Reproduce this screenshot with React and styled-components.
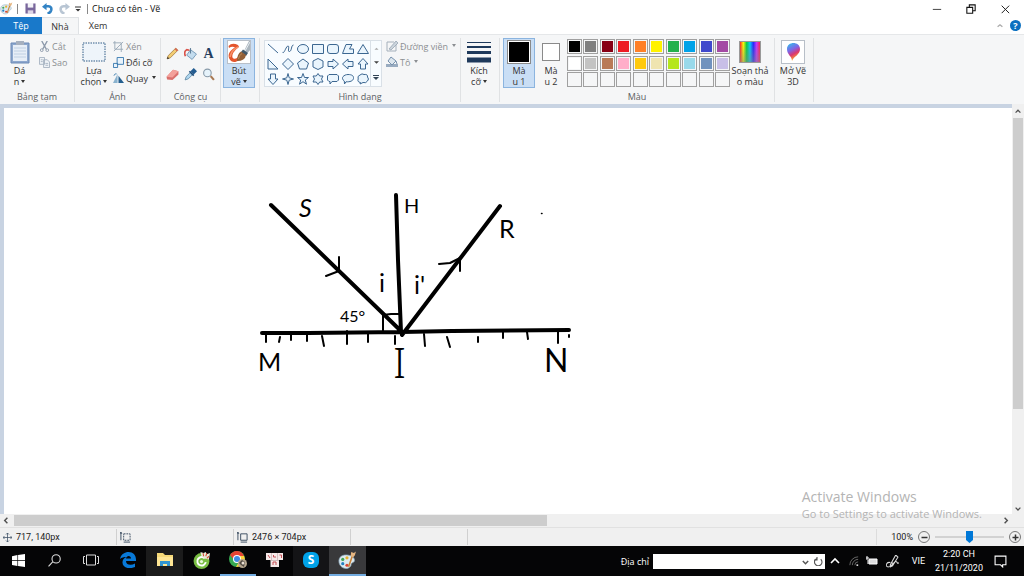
import React, { useState } from "react";
import styled, { createGlobalStyle } from "styled-components";

const paints = [
  "#000000", "#7f7f7f", "#880015", "#ed1c24", "#ff7f27", "#fff200", "#22b14c", "#00a2e8", "#3f48cc", "#a349a4",
  "#ffffff", "#c3c3c3", "#b97a57", "#ffaec9", "#ffc90e", "#efe4b0", "#b5e61d", "#99d9ea", "#7092be", "#c8bfe7",
  "", "", "", "", "", "", "", "", "", "",
];

// every shape is drawn in a 12x12 box
const shapes = [
  ["Line", "M1 1L11 10"],
  ["Curve", "M.5 9C2 12 4 3 6 3S5 9 7.500 8.500S9 2 11.500 2"],
  ["Oval", "M.5 6a5.5 4.5 0 1 0 11 0a5.5 4.5 0 1 0-11 0"],
  ["Rectangle", "M.5 1.5h11v9H.5z"],
  ["Rounded rectangle", "M3 1.5h6q2.5 0 2.5 2.500v4q0 2.500-2.500 2.500H3Q.5 10.500.5 8V4Q.5 1.500 3 1.500z"],
  ["Polygon", "M4 1.500h6L7.500 6H11.500V10.500H.5z"],
  ["Triangle", "M6 1.500L11.500 10.500H.5z"],
  ["Right triangle", "M1 1V11H11z"],
  ["Diamond", "M6 .5L11.500 6L6 11.500L.5 6z"],
  ["Pentagon", "M6 1L11.500 5L9.500 11H2.500L.5 5z"],
  ["Hexagon", "M6 .5L11 3V9L6 11.500L1 9V3z"],
  ["Right arrow", "M1 3.500H6V1L11.500 6L6 11V8.500H1z"],
  ["Left arrow", "M11 3.500H6V1L.5 6L6 11V8.500H11z"],
  ["Up arrow", "M3.500 11V6H1L6 .5L11 6H8.500V11z"],
  ["Down arrow", "M3.500 1V6H1L6 11.500L11 6H8.500V1z"],
  ["Four-point star", "M6 .5L7.200 4.800L11.500 6L7.200 7.200L6 11.500L4.800 7.200L.5 6L4.800 4.800z"],
  ["Five-point star", "M6 .5L7.500 4.500H11.500L8.300 7L9.500 11.200L6 8.700L2.500 11.200L3.700 7L.5 4.500H4.500z"],
  ["Six-point star", "M6 .5L7.700 3H11L9.500 6L11 9H7.700L6 11.500L4.300 9H1L2.500 6L1 3H4.300z"],
  ["Rounded callout", "M2 1.500H10L11.500 3V7L10 8.500H5L3 11V8.500H2L.5 7V3z"],
  ["Oval callout", "M4 8.800L2.500 11L2.300 8C-2 5 2 1.500 6 1.500S12 3 11.500 5.500S8 9 4 8.800z"],
  ["Cloud callout", "M3 2Q5 0 7 1.500Q11 1 10.500 4Q12.500 6 10.500 8Q9 10.500 6 9.500L3 11L3.500 9.500Q0 9 1.200 6Q0 3 3 2z"],
];

const Icon = ({ w = 12, h = w, box = "0 0 12 12", children }) => (
  <svg width={w} height={h} viewBox={box} fill="none" aria-hidden="true">
    {children}
  </svg>
);

const Palette = ({ size = 18 }) => (
  <Icon w={size} box="0 0 18 18">
    <path d="M1 11C0 5 5 3 10 4C16 5 17 10 14 11C11 12 14 14 10 16C7 17.500 2 16 1 11z" fill="#dceaf0" stroke="#8faabd" strokeWidth=".7" />
    <circle cx="4.500" cy="8" r="1.500" fill="#42a654" />
    <circle cx="8.500" cy="6.500" r="1.500" fill="#e6b132" />
    <circle cx="4.500" cy="12" r="1.500" fill="#257fc1" />
    <circle cx="8.500" cy="13.500" r="1.500" fill="#d94436" />
    <path d="M10 15L13.500 5" stroke="#c98236" strokeWidth="1.500" />
    <path d="M12 5L12.500 1L15 2L17 .5L16 4L14.500 6z" fill="#e5b580" />
  </Icon>
);

const Chevron = ({ d = "M2 4.500L5 7.500L8 4.500", color = "#505050", size = 10 }) => (
  <Icon w={size} box="0 0 10 10">
    <path d={d} stroke={color} strokeWidth="1.600" />
  </Icon>
);

const Brush = () => (
  <Icon w={24} box="0 0 24 24">
    <path d="M11 5Q5 2 1.500 6L2 8Q5 6 8 7.500C3 10 0 15 2.500 19C5 24.500 13 22 15 16L12.500 15C10 19 7 20 5.500 17.500C4.500 14 8 10 12 7z" fill="#e4552c" />
    <path d="M3 17C4 12 7 9 11 7" stroke="#f7926a" strokeWidth="1.500" />
    <path d="M17 11L22 1H24V9L20.500 13z" fill="#a9b4bd" />
    <path d="M18 11L23 2" stroke="#e8edf1" />
    <path d="M16 9.500L21 13L19 16L14 12z" fill="#42596a" />
    <path d="M10 21Q10 14 14 11.500L19 15Q18 21 10 21z" fill="#936037" />
    <path d="M11.500 19Q12 15 15 13.500" stroke="#bc8a58" />
  </Icon>
);

const Ink = () => (
  <Drawing viewBox="0 108 600 300" aria-label="Drawing">
    <g stroke="#000" fill="none" strokeLinecap="round" strokeLinejoin="round">
      <path strokeWidth="4" d="M271 205L402 332M396 195L398 260L401 332M402 335L500 206M262 333L308 333L402 332L452 331L569 330" />
      <path strokeWidth="2" d="M339 257V271L326 276M439 264L450 263L460 258V271M383 331V315L391 314H401M266 334V342M280 337L279 342M291 335V340M307 334V341M322 336L324 346M347 331V344M368 334V342M395 336V344M424 334L425 346M447 337L450 347M478 337V342M503 330V338M527 332L528 339M558 332V343M569 335V337" />
      <path strokeWidth="1.500" d="M541.500 213.500h.5" />
    </g>
    <Pen x="299" y="217" $size={25} $slant>S</Pen>
    <Pen x="404" y="213" $size={20}>H</Pen>
    <Pen x="499" y="238" $size={25}>R</Pen>
    <Pen x="379" y="292" $size={25}>i</Pen>
    <Pen x="414" y="294" $size={25}>i'</Pen>
    <Pen x="340" y="322" $size={16}>45°</Pen>
    <Pen x="258" y="371" $size={25}>M</Pen>
    <Pen x="393" y="378" $size={42} $serif>I</Pen>
    <Pen x="544" y="372" $size={32}>N</Pen>
  </Drawing>
);

function Ribbon() {
  const [active, setActive] = useState(1);
  return (
    <RibbonBar>
      <Group $w={75}>
        <Tools>
          <BigButton $w={39}>
            <Picture>
              <Icon w={20} h={24} box="0 0 20 24">
                <path d="M1 3H19V23H1z" fill="#8ea8ce" stroke="#6b89b6" />
                <path d="M3 5H17V21H3z" fill="#e7eef7" />
                <path d="M6 1H14V5H6z" fill="#a6b0bf" />
                <path d="M4 8H16M4 11H16M4 14H16M4 17H16" stroke="#c0d0e3" />
              </Icon>
            </Picture>
            <span>Dá</span>
            <span>n<Caret /></span>
          </BigButton>
          <Stack>
            <SmallButton disabled>
              <Icon w={11}>
                <path d="M3 0L8 9M9 0L4 9" stroke="#8c99aa" strokeWidth="1.500" />
                <circle cx="3" cy="10" r="1.500" stroke="#8c99aa" />
                <circle cx="9" cy="10" r="1.500" stroke="#8c99aa" />
              </Icon>
              Cắt
            </SmallButton>
            <SmallButton disabled>
              <Icon w={11}>
                <path d="M.5.5H6V8H.5zM5 3H9L11.500 5.500V11.500H5z" fill="#eef2f6" stroke="#a5b2c1" />
                <path d="M2 3H4M2 5H4M7 7H10M7 9H10" stroke="#a5b2c1" />
              </Icon>
              Sao
            </SmallButton>
          </Stack>
        </Tools>
        <Label>Bảng tạm</Label>
      </Group>

      <Group $w={86}>
        <Tools>
          <BigButton $w={38}>
            <Picture>
              <Icon w={24} h={20} box="0 0 24 20">
                <path d="M1 1H23V19H1z" stroke="#315d87" strokeDasharray="1.500 1" fill="#eef4fa" />
              </Icon>
            </Picture>
            <span>Lựa</span>
            <span>chọn<Caret /></span>
          </BigButton>
          <Stack>
            <SmallButton disabled>
              <Icon w={11}><path d="M2 0V9H11M0 2H9V12M1 11L11 1" stroke="#99a8b7" /></Icon>
              Xén
            </SmallButton>
            <SmallButton>
              <Icon w={11}>
                <path d="M4.500.5H11.500V8H4.500zM.5 7H5V11.500H.5z" fill="#e9f3fb" stroke="#3676ad" />
              </Icon>
              Đổi cỡ
            </SmallButton>
            <SmallButton>
              <Icon w={11}>
                <path d="M5 1V11H0z" fill="#8ab3cf" />
                <path d="M6 3L12 11H6z" fill="#245f8f" />
                <path d="M1 3Q2 0 4 1" stroke="#4c88b4" />
              </Icon>
              Quay<Caret />
            </SmallButton>
          </Stack>
        </Tools>
        <Label>Ảnh</Label>
      </Group>

      <Group $w={60}>
        <ToolGrid>
          <ToolButton aria-label="Pencil">
            <Icon w={13}>
              <path d="M1 11L2 8L9 1L11 3L4 10z" fill="#f2cd73" stroke="#a17639" strokeWidth=".7" />
              <path d="M8 2L9 1L11 3L10 4z" fill="#d96055" />
              <path d="M1 11L1.500 9L3 10.500z" fill="#333" />
            </Icon>
          </ToolButton>
          <ToolButton aria-label="Fill with color">
            <Icon w={13}>
              <path d="M6 2.500L11.500 6.500L7.500 11.500L2.500 7.500z" fill="#c3dcee" stroke="#6d93b3" strokeWidth=".8" />
              <path d="M1.300 8.500Q-.5 4 2.500 2.500L5 3" stroke="#d9534a" strokeWidth="1.500" />
              <path d="M6 6V1" stroke="#5e7e99" />
            </Icon>
          </ToolButton>
          <ToolButton aria-label="Text">A</ToolButton>
          <ToolButton aria-label="Eraser">
            <Icon w={13}>
              <path d="M.5 8L6.500 1.500L11.500 3V6L6 11L1 10.500z" fill="#d96f6c" />
              <path d="M.5 8L6.500 1.500L11.500 3L6 8.800z" fill="#f3a09a" />
            </Icon>
          </ToolButton>
          <ToolButton aria-label="Color picker">
            <Icon w={13}>
              <path d="M1 11L2 8L6 4L8 6L4 10z" fill="#afd6ef" stroke="#54809c" strokeWidth=".7" />
              <path d="M6 3L9 0L12 3L9 6z" fill="#235c91" />
              <path d="M5 3L9 7" stroke="#1c4b79" strokeWidth="1.500" />
            </Icon>
          </ToolButton>
          <ToolButton aria-label="Magnifier">
            <Icon w={13}>
              <circle cx="5" cy="4.500" r="3.500" fill="#e6f3fb" stroke="#8799a8" />
              <path d="M8 7.500L11 11" stroke="#a87954" strokeWidth="2" />
            </Icon>
          </ToolButton>
        </ToolGrid>
        <Label>Công cụ</Label>
      </Group>

      <Group $w={39}>
        <Tools $inset={2}>
          <BigButton $w={32} $on>
            <Picture $frame><Brush /></Picture>
            <span>Bút</span>
            <span>vẽ<Caret /></span>
          </BigButton>
        </Tools>
      </Group>

      <Group $w={201}>
        <Tools $inset={4}>
          <Gallery>
            <ShapeGrid>
              {shapes.map(([name, d]) => (
                <ShapeButton key={name} aria-label={name}>
                  <Icon><path d={d} fill={name === "Line" || name === "Curve" ? "none" : "#eaf5fd"} stroke="#3c6791" /></Icon>
                </ShapeButton>
              ))}
            </ShapeGrid>
            <GalleryScroll>
              <ArrowButton aria-label="Previous shapes"><Icon w={5}><path d="M1 9L6 4L11 9z" fill="#aaa" /></Icon></ArrowButton>
              <ArrowButton aria-label="Next shapes"><Icon w={5}><path d="M0 3H12L6 9z" fill="#444" /></Icon></ArrowButton>
              <ArrowButton aria-label="All shapes"><Icon w={6}><path d="M0 1H12" stroke="#345" strokeWidth="2" /><path d="M0 4H12L6 10z" fill="#345" /></Icon></ArrowButton>
            </GalleryScroll>
          </Gallery>
          <Stack>
            <SmallButton disabled>
              <Icon w={12}>
                <path d="M10 4V11H1V2H8" stroke="#a5b0bb" />
                <path d="M3 9L10 1L12 3L5 10z" fill="#cbd4dc" stroke="#8d9cac" strokeWidth=".7" />
              </Icon>
              Đường viền<Caret />
            </SmallButton>
            <SmallButton disabled>
              <Icon w={12}>
                <path d="M0 8H12V11H0z" fill="#98abc0" />
                <path d="M5 1L10 5L6 9L2 5z" fill="#dce6ee" stroke="#7892ad" />
                <path d="M10 5L11 8" stroke="#7892ad" />
              </Icon>
              Tô<Caret />
            </SmallButton>
          </Stack>
        </Tools>
        <Label>Hình dạng</Label>
      </Group>

      <Group $w={39}>
        <Tools>
          <BigButton $w={36}>
            <Picture>
              <Icon w={24} h={21} box="0 0 24 21">
                <path d="M0 .5H24" stroke="#1e395b" />
                <path d="M0 5H24" stroke="#1e395b" strokeWidth="2" />
                <path d="M0 10.500H24" stroke="#1e395b" strokeWidth="3" />
                <path d="M0 18H24" stroke="#1e395b" strokeWidth="5" />
              </Icon>
            </Picture>
            <span>Kích</span>
            <span>cỡ<Caret /></span>
          </BigButton>
        </Tools>
      </Group>

      <Group $w={275}>
        <Tools $inset={3}>
          <BigButton $w={32} $on={active === 1} onClick={() => setActive(1)}>
            <Picture><Swatch $size={24} $color="#000" /></Picture>
            <span>Mà</span>
            <span>u 1</span>
          </BigButton>
          <BigButton $w={32} $on={active === 2} onClick={() => setActive(2)}>
            <Picture><Swatch $size={18} $color="#fff" /></Picture>
            <span>Mà</span>
            <span>u 2</span>
          </BigButton>
          <Colors>
            {paints.map((color, i) => (
              <Paint key={i} $color={color} aria-label={color || "Empty color"} />
            ))}
          </Colors>
          <BigButton $w={40}>
            <Picture><Spectrum /></Picture>
            <span>Soạn thả</span>
            <span>o màu</span>
          </BigButton>
        </Tools>
        <Label>Màu</Label>
      </Group>

      <Group $w={39}>
        <Tools>
          <BigButton $w={36}>
            <Picture $frame>
              <Icon w={22} box="0 0 22 22">
                <defs>
                  <linearGradient id="drop" x1="0" y1="0" x2=".4" y2="1">
                    <stop stopColor="#28c8ed" />
                    <stop offset=".45" stopColor="#8064e5" />
                    <stop offset=".7" stopColor="#dc3670" />
                    <stop offset="1" stopColor="#ffae22" />
                  </linearGradient>
                </defs>
                <path d="M10 20C10 15 5 14 5 8C5 0 18 0 18 8C18 14 12 15 10 20z" fill="url(#drop)" />
              </Icon>
            </Picture>
            <span>Mở Vẽ</span>
            <span>3D</span>
          </BigButton>
        </Tools>
      </Group>
    </RibbonBar>
  );
}

function Taskbar() {
  return (
    <TaskbarRow>
      <Apps>
        <AppButton aria-label="Start">
          <Icon w={13}><path d="M0 2L5 1V5.600H0zM5.600.9L12 0V5.600H5.600zM0 6.300H5V11L0 10.200zM5.600 6.300H12V12L5.600 11z" fill="#fff" /></Icon>
        </AppButton>
        <AppButton aria-label="Search">
          <Icon w={13}><circle cx="7.500" cy="4.500" r="3.800" stroke="#ddd" /><path d="M4.500 7L.5 11.500" stroke="#ddd" /></Icon>
        </AppButton>
        <AppButton aria-label="Task view">
          <Icon w={16} box="0 0 16 12"><path d="M3.500 1H12.500V11H3.500zM2 2.500H.5V9.500H2M14 2.500H15.500V9.500H14" stroke="#ddd" /></Icon>
        </AppButton>
        <AppButton aria-label="Edge">
          <Icon w={16} box="0 0 16 16"><path d="M0 7C1 2 5 0 8.500 0C13 0 16 3 16 7.500V9H6C6 13 11 14 15 11.500V15C8 18 2 15 2.500 10C2.700 7.500 4 6 6.500 5C4 5 1.500 5.500 0 7zM6 6.500H11C11 3 6.500 3 6 6.500z" fill="#0879d8" /></Icon>
        </AppButton>
        <AppButton $shade="#1b1b1b" aria-label="File Explorer">
          <Icon w={16} box="0 0 16 14"><path d="M0 0H6L8 2H16V13H0z" fill="#f6d978" /><path d="M0 4H16V13H0z" fill="#ffe694" /><path d="M3 13V8H13V13H10V11H6V13z" fill="#3295d0" /></Icon>
        </AppButton>
        <AppButton aria-label="Browser">
          <Icon w={17} box="0 0 16 16">
            <circle cx="8" cy="8.500" r="7.500" fill="#79bd43" />
            <path d="M11 6A4 4 0 1 0 12 9.500" stroke="#fff" strokeWidth="1.800" />
            <circle cx="8" cy="9" r="1.500" fill="#e9f6dc" />
            <path d="M8 4L7 0L10 1L12 0L13 2L16 1L15 7L11 6z" fill="#e8ecd9" />
            <path d="M10 4L9.500 1M12 4L13 1M13 6L15 4" stroke="#d84b34" />
          </Icon>
        </AppButton>
        <AppButton $running aria-label="Chrome">
          <Icon w={18} box="0 0 18 18">
            <circle cx="8" cy="8" r="8" fill="#37a852" />
            <path d="M1 4C5-2 13-1 15 5H8L5 9z" fill="#e64334" />
            <path d="M15 5C18 11 13 16 7 16L11 9L10 5z" fill="#ffd13a" />
            <circle cx="8" cy="8" r="4" fill="#fff" />
            <circle cx="8" cy="8" r="3" fill="#408be6" />
            <circle cx="13.500" cy="12.500" r="4.500" fill="#b5a68e" />
            <path d="M10 12L13 9L16 11L15 16L12 14" fill="#524a42" />
            <circle cx="14" cy="12" r="1.500" fill="#e9ded0" />
          </Icon>
        </AppButton>
        <AppButton aria-label="Unikey">
          <Icon w={17} h={15} box="0 0 17 15">
            <path d="M0 0H17V7H13V14H4.500V7H0z" fill="#f5e9e8" />
            <path d="M5.500 0V7M11.500 0V7M4.500 7.500H13" stroke="#b9a3a3" strokeWidth=".6" />
            <path d="M2 2L4 5M7.500 2V4H10M13.500 2H15.500V5M7 9H10V12M7 12V9" stroke="#c54f54" />
          </Icon>
        </AppButton>
        <AppButton $shade="#141416" aria-label="Skype">
          <SkypeMark>S</SkypeMark>
        </AppButton>
        <AppButton $running $shade="#39393b" aria-label="Paint"><Palette size={19} /></AppButton>
      </Apps>
      <Tray>
        <label htmlFor="address">Địa chỉ</label>
        <Address>
          <input id="address" type="text" />
          <TrayButton $w={12} aria-label="Address history"><Chevron size={9} color="#555" /></TrayButton>
          <TrayButton $w={14} aria-label="Refresh">
            <Icon w={9}><path d="M4 2A5 5 0 1 0 9 3M4 0V4H0" stroke="#555" strokeWidth="1.500" /></Icon>
          </TrayButton>
        </Address>
        <TrayButton $w={20} aria-label="Show hidden icons"><Chevron d="M1 7L5 3L9 7" color="#fff" /></TrayButton>
        <TrayButton $w={17} aria-label="Network">
          <Icon w={10}><path d="M1 11A10 10 0 0 1 11 1M4 11A7 7 0 0 1 11 4M7 11A4 4 0 0 1 11 7" stroke="#777" /><path d="M9 10h2v2H9z" fill="#ddd" /></Icon>
        </TrayButton>
        <TrayButton $w={20} aria-label="Battery">
          <Icon w={12} h={10} box="0 0 12 10"><path d="M3 3H11V8H3z" fill="#ddd" stroke="#fff" /><path d="M0 2H3M1 0V4M2 4V8" stroke="#fff" /></Icon>
        </TrayButton>
        <TrayButton $w={21} aria-label="Windows Ink">
          <Icon w={13}><path d="M4 9L9 0L11 2L6 10L4 11zM5 7L7 8M4 7C0 6-1 11 2 11C6 11 7 6 9 6S10 9 12 7" stroke="#ddd" /></Icon>
        </TrayButton>
        <TrayButton $w={31}>VIE</TrayButton>
        <Clock>
          <span>2:20 CH</span>
          <span>21/11/2020</span>
        </Clock>
        <TrayButton $w={32} aria-label="Notifications">
          <Icon w={13}><path d="M1 1H11V9H8V11L6 9H1z" stroke="#fff" /></Icon>
        </TrayButton>
      </Tray>
    </TaskbarRow>
  );
}

export default function App() {
  const [zoom, setZoom] = useState(50);
  return (
    <Window>
      <GlobalStyle />
      <TitleBar>
        <QuickAccess>
          <Palette size={13} />
          <Rule />
          <IconButton $w={17} aria-label="Save">
            <Icon w={11}><path d="M.5.5H11.500V11.500H.5z" fill="#79679c" /><path d="M3 0H9V5H3z" fill="#f4f4f8" /><path d="M3 8H9V12H3z" fill="#ded7e6" /></Icon>
          </IconButton>
          <IconButton $w={17} aria-label="Undo">
            <Icon w={11}><path d="M3 3.500H7Q11 4 10 8Q9 11 6 11.500" stroke="#3283c4" strokeWidth="2.800" /><path d="M0 4L5 0V8z" fill="#3283c4" /></Icon>
          </IconButton>
          <IconButton $w={17} aria-label="Redo">
            <Icon w={11}><path d="M9 3.500H5Q1 4 2 8Q3 11 6 11.500" stroke="#b8c5d3" strokeWidth="2.800" /><path d="M12 4L7 0V8z" fill="#b8c5d3" /></Icon>
          </IconButton>
          <IconButton $w={10} aria-label="Customize toolbar">
            <Icon w={6}><path d="M0 2H12" stroke="#333" strokeWidth="2" /><path d="M1 6H11L6 11z" fill="#333" /></Icon>
          </IconButton>
          <Rule />
        </QuickAccess>
        <Title>Chưa có tên - Vẽ</Title>
        <WindowButton aria-label="Minimize"><Icon w={10}><path d="M1 6.500H11" stroke="#222" /></Icon></WindowButton>
        <WindowButton aria-label="Restore"><Icon w={10}><path d="M1 4H8V11H1zM4 4V1H11V8H8" stroke="#111" strokeWidth="1.300" /></Icon></WindowButton>
        <WindowButton aria-label="Close"><Icon w={10}><path d="M2 2L11 11M11 2L2 11" stroke="#222" strokeWidth="1.200" /></Icon></WindowButton>
      </TitleBar>
      <Tabs>
        <Tab $kind="file" $w={42}>Tệp</Tab>
        <Tab $kind="open" $w={37}>Nhà</Tab>
        <Tab $w={38}>Xem</Tab>
        <Spacer />
        <IconButton $w={20} aria-label="Collapse ribbon"><Chevron d="M2 6L5 3.500L8 6" color="#aaa" size={8} /></IconButton>
        <Help aria-label="Help">?</Help>
      </Tabs>
      <Ribbon />
      <Workspace>
        <Surface>
          <Canvas><Ink /></Canvas>
        </Surface>
        <ScrollBar $vertical>
          <ScrollArrow aria-label="Scroll up"><Chevron d="M2 7L5 4L8 7" size={8} /></ScrollArrow>
          <ScrollThumb $grow={293} />
          <ScrollRest $grow={92} />
          <ScrollArrow aria-label="Scroll down"><Chevron size={8} /></ScrollArrow>
        </ScrollBar>
        <Watermark>
          <strong>Activate Windows</strong>
          <span>Go to Settings to activate Windows.</span>
        </Watermark>
      </Workspace>
      <ScrollBar>
        <ScrollArrow aria-label="Scroll left"><Chevron d="M6 2L3 5L6 8" size={9} /></ScrollArrow>
        <ScrollThumb $grow={534} />
        <ScrollRest $grow={452} />
        <ScrollArrow aria-label="Scroll right"><Chevron d="M4 2L7 5L4 8" size={9} /></ScrollArrow>
        <Corner />
      </ScrollBar>
      <StatusBar>
        <StatusCell>
          <Icon w={9}><path d="M6 0V12M0 6H12M4 2L6 0L8 2M4 10L6 12L8 10M2 4L0 6L2 8M10 4L12 6L10 8" stroke="#3d5066" /></Icon>
          717, 140px
        </StatusCell>
        <StatusCell>
          <Icon w={11}><path d="M4 2H11V9H4z" stroke="#34475c" strokeDasharray="2 1" /><path d="M1 1V9M0 2L1 0L2 2M4 11H11" stroke="#34475c" /></Icon>
        </StatusCell>
        <StatusCell>
          <Icon w={11}><path d="M4 2H11V9H4zM1 1V9M0 2L1 0L2 2M4 11H11" stroke="#34475c" /></Icon>
          2476 × 704px
        </StatusCell>
        <StatusCell />
        <Spacer />
        <Zoom>
          <label htmlFor="zoom">100%</label>
          <RoundButton aria-label="Zoom out" onClick={() => setZoom(zoom - 10)}><Icon w={9}><path d="M2 6H10" stroke="#333" strokeWidth="2" /></Icon></RoundButton>
          <Slider id="zoom" type="range" value={zoom} onChange={(e) => setZoom(Number(e.target.value))} />
          <RoundButton aria-label="Zoom in" onClick={() => setZoom(zoom + 10)}><Icon w={9}><path d="M2 6H10M6 2V10" stroke="#333" strokeWidth="2" /></Icon></RoundButton>
        </Zoom>
      </StatusBar>
      <Taskbar />
    </Window>
  );
}

const GlobalStyle = createGlobalStyle`
  * {
    box-sizing: border-box;
  }
  body {
    margin: 0;
    overflow: hidden;
    font-family: "Open Sans", "Noto Sans", sans-serif;
    font-size: 9px;
    line-height: 11px;
    color: #333;
  }
  button, input {
    margin: 0;
    padding: 0;
    border: 0;
    font: inherit;
    color: inherit;
    background: none;
  }
  svg {
    display: block;
    flex: none;
  }
`;

const Window = styled.div`
  display: flex;
  flex-direction: column;
  height: 100vh;
  background: #fff;
`;
const TitleBar = styled.header`
  display: flex;
  align-items: center;
  height: 17px;
  padding-right: 2px;
`;
const QuickAccess = styled.div`
  display: flex;
  align-items: center;
  flex: none;
`;
const Rule = styled.span`
  flex: none;
  width: 1px;
  height: 10px;
  margin: 0 4px;
  background: #888;
`;
const IconButton = styled.button`
  display: grid;
  place-items: center;
  flex: none;
  width: ${(p) => p.$w}px;
  height: 16px;
`;
const Title = styled.span`
  flex: 1;
  color: #111;
  white-space: nowrap;
`;
const WindowButton = styled.button`
  display: grid;
  place-items: center;
  width: 34px;
  height: 17px;
`;
const Tabs = styled.nav`
  display: flex;
  align-items: center;
  height: 17px;
  padding-right: 3px;
`;
const Tab = styled.button`
  width: ${(p) => p.$w}px;
  height: 17px;
  color: ${(p) => (p.$kind === "file" ? "#fff" : "#333")};
  background: ${(p) => (p.$kind === "file" ? "#1979ca" : p.$kind === "open" ? "#f5f6f7" : "none")};
  border: solid #dfe2e5;
  border-width: ${(p) => (p.$kind === "open" ? "1px 1px 0 0" : "0")};
`;
const Spacer = styled.div`
  flex: 1;
`;
const Help = styled.button`
  width: 11px;
  height: 11px;
  border-radius: 50%;
  color: #fff;
  font-weight: 700;
  background: #0b70c0;
`;
const RibbonBar = styled.section`
  display: flex;
  height: 70px;
  padding-top: 3px;
  background: #f5f6f7;
  border-top: 1px solid #e5e7e9;
`;
const Group = styled.div`
  display: flex;
  flex-direction: column;
  flex: none;
  width: ${(p) => p.$w}px;
  height: 64px;
  border-right: 1px solid #e0e2e4;
`;
const Tools = styled.div`
  display: flex;
  height: 53px;
  padding-left: ${(p) => p.$inset || 0}px;
`;
const Label = styled.div`
  text-align: center;
  color: #5c6063;
`;
const BigButton = styled.button`
  display: flex;
  flex-direction: column;
  align-items: center;
  flex: none;
  width: ${(p) => p.$w}px;
  height: 50px;
  white-space: nowrap;
  border: 1px solid ${(p) => (p.$on ? "#8bb4df" : "transparent")};
  background: ${(p) => (p.$on ? "#c9def5" : "none")};
`;
const Picture = styled.span`
  display: grid;
  place-items: center;
  width: ${(p) => (p.$frame ? "24px" : "100%")};
  height: 24px;
  margin: 1px 0;
  background: ${(p) => (p.$frame ? "#fff" : "none")};
  outline: ${(p) => (p.$frame ? "1px solid #b8bfc8" : "none")};
  outline-offset: -1px;
`;
const Stack = styled.div`
  display: flex;
  flex-direction: column;
  flex: 1;
`;
const SmallButton = styled.button`
  display: flex;
  align-items: center;
  gap: 2px;
  height: 16px;
  white-space: nowrap;
  &:disabled {
    color: #8b8e92;
  }
`;
const Caret = styled.i`
  display: inline-block;
  margin: 0 0 2px 2px;
  border: solid transparent;
  border-width: 3px 2px 0;
  border-top-color: currentColor;
`;
const ToolGrid = styled.div`
  display: grid;
  grid-template-columns: repeat(3, 18px);
  grid-auto-rows: 21px;
  justify-content: center;
  height: 53px;
  padding-top: 5px;
`;
const ToolButton = styled.button`
  display: grid;
  place-items: center;
  color: #243d5e;
  font: 700 14px "Liberation Serif", serif;
`;
const Gallery = styled.div`
  display: flex;
  height: 47px;
  margin: 2px 4px 0 0;
  background: #f8fcff;
  border: 1px solid #d9e0e7;
`;
const ShapeGrid = styled.div`
  display: grid;
  grid-template: repeat(3, 15px) / repeat(7, 15px);
`;
const ShapeButton = styled.button`
  display: grid;
  place-items: center;
`;
const GalleryScroll = styled.div`
  display: grid;
  width: 11px;
  border-left: 1px solid #d9e0e7;
`;
const ArrowButton = styled.button`
  display: grid;
  place-items: center;
`;
const Swatch = styled.span`
  width: ${(p) => p.$size}px;
  height: ${(p) => p.$size}px;
  background: ${(p) => p.$color};
  border: 1px solid #8a8a8a;
  box-shadow: inset 0 0 0 1px #fff;
`;
const Colors = styled.div`
  display: grid;
  grid-template: repeat(3, 15px) / repeat(10, 15px);
  place-content: space-between;
  width: 163px;
  height: 48px;
  margin-top: 1px;
`;
const Paint = styled.button`
  background: ${(p) => p.$color || "#f5f6f7"};
  border: 1px solid #a0a0a0;
  box-shadow: inset 0 0 0 1px #f5f6f7;
`;
const Spectrum = styled.span`
  width: 22px;
  height: 22px;
  border: 1px solid #999;
  background:
    linear-gradient(transparent, #8888),
    linear-gradient(90deg, #f22, #ff0, #0c4, #0cf, #22f, #c3f, #f24);
`;
const Workspace = styled.main`
  position: relative;
  display: flex;
  flex: 1;
  min-height: 0;
`;
const Surface = styled.div`
  flex: 1;
  min-width: 0;
  padding: 4px 0 0 4px;
  background: #c8d3e2;
`;
const Canvas = styled.div`
  height: 100%;
  overflow: hidden;
  background: #fff;
`;
const Drawing = styled.svg`
  width: 600px;
  height: 300px;
  margin-left: -4px;
`;
const Pen = styled.text`
  font-family: ${(p) => (p.$serif ? '"Noto Sans", sans-serif' : "Lato, sans-serif")};
  font-size: ${(p) => p.$size}px;
  font-style: ${(p) => (p.$slant ? "italic" : "normal")};
  font-weight: ${(p) => (p.$serif ? 300 : 400)};
  fill: #000;
`;
const Watermark = styled.div`
  position: absolute;
  right: 42px;
  bottom: -7px;
  display: flex;
  flex-direction: column;
  color: #b4b4b4;
  font-size: 11px;
  line-height: 14px;
  white-space: nowrap;
  pointer-events: none;
  strong {
    font-size: 14px;
    line-height: 20px;
    font-weight: 400;
  }
`;
const ScrollBar = styled.div`
  display: flex;
  flex: none;
  flex-direction: ${(p) => (p.$vertical ? "column" : "row")};
  ${(p) => (p.$vertical ? "width: 12px;" : "height: 13px;")}
  background: #f0f0f0;
`;
const ScrollArrow = styled.button`
  display: grid;
  place-items: center;
  flex: 0 0 13px;
`;
const ScrollThumb = styled.div`
  flex: ${(p) => p.$grow};
  margin: 1px;
  background: #cdcdcd;
`;
const ScrollRest = styled.div`
  flex: ${(p) => p.$grow};
`;
const Corner = styled.div`
  width: 12px;
`;
const StatusBar = styled.footer`
  display: flex;
  align-items: center;
  height: 19px;
  background: #f0f0f0;
  border-top: 1px solid #e1e1e1;
  font-family: Roboto, sans-serif;
  color: #222;
`;
const StatusCell = styled.div`
  display: flex;
  align-items: center;
  gap: 4px;
  width: 117px;
  height: 16px;
  padding-left: 3px;
  border-right: 1px solid #d0d0d0;
`;
const Zoom = styled.div`
  display: flex;
  align-items: center;
  gap: 5px;
  height: 16px;
  padding: 0 3px 0 14px;
  border-left: 1px solid #dcdcdc;
`;
const RoundButton = styled.button`
  display: grid;
  place-items: center;
  width: 12px;
  height: 12px;
  border: 1px solid #777;
  border-radius: 50%;
`;
const Slider = styled.input`
  width: 69px;
  height: 14px;
  appearance: none;
  &::-webkit-slider-runnable-track {
    height: 2px;
    background: #d2d2d2;
  }
  &::-webkit-slider-thumb {
    appearance: none;
    width: 7px;
    height: 12px;
    margin-top: -5px;
    background: #0078d7;
    clip-path: polygon(0 0, 100% 0, 100% 75%, 50% 100%, 0 75%);
  }
`;
const TaskbarRow = styled.footer`
  display: flex;
  flex: none;
  justify-content: space-between;
  height: 30px;
  color: #fff;
  background: #050506;
`;
const Apps = styled.nav`
  display: flex;
  width: 366px;
`;
const AppButton = styled.button`
  display: grid;
  place-items: center;
  flex: 1;
  background: ${(p) => p.$shade || "none"};
  border-bottom: 2px solid ${(p) => (p.$running ? "#73ace0" : "transparent")};
`;
const SkypeMark = styled.span`
  width: 16px;
  height: 16px;
  border-radius: 6px;
  background: #00a2e8;
  font-size: 12px;
  font-weight: 700;
  line-height: 16px;
`;
const Tray = styled.div`
  display: flex;
  align-items: center;
  padding-right: 8px;
  font-family: Roboto, sans-serif;
  label {
    margin-right: 4px;
    font-family: "Open Sans", sans-serif;
  }
`;
const Address = styled.div`
  display: flex;
  align-items: center;
  width: 172px;
  height: 15px;
  background: #fff;
  input {
    flex: 1;
    min-width: 0;
    height: 15px;
    color: #222;
  }
`;
const TrayButton = styled.button`
  display: grid;
  place-items: center;
  width: ${(p) => p.$w}px;
  height: 15px;
`;
const Clock = styled.div`
  display: flex;
  flex-direction: column;
  align-items: center;
  width: 50px;
  line-height: 14px;
`;
